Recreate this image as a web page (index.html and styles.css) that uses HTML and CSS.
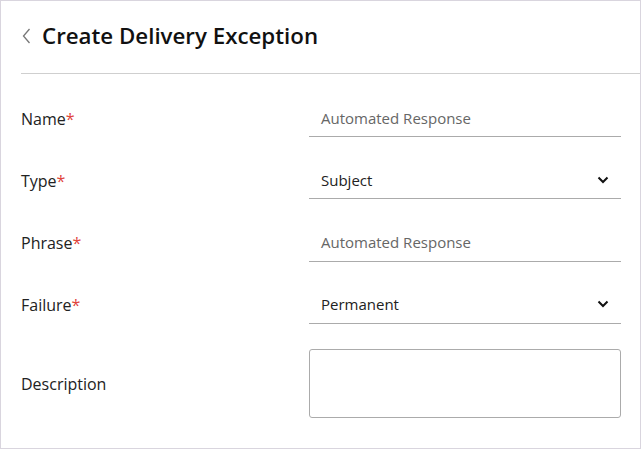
FILE: index.html
```html
<!DOCTYPE html>
<html>
<head>
<meta charset="utf-8">
<link rel="stylesheet" href="styles.css">
</head>
<body>
<div class="page">
  <header class="header">
    <svg class="back" width="9" height="16" viewBox="0 0 9 16"><path d="M7.5 1 L1.5 8 L7.5 15" fill="none" stroke="#777" stroke-width="1.3"/></svg>
    <h1 class="title">Create Delivery Exception</h1>
  </header>
  <form class="form">
    <div class="row">
      <label class="label">Name<span class="req">*</span></label>
      <div class="field"><span class="placeholder">Automated Response</span></div>
    </div>
    <div class="row">
      <label class="label">Type<span class="req">*</span></label>
      <div class="field select"><span class="value">Subject</span>
        <svg class="caret" width="12" height="8" viewBox="0 0 12 8"><path d="M1.5 1.5 L6 6 L10.5 1.5" fill="none" stroke="#111" stroke-width="2"/></svg>
      </div>
    </div>
    <div class="row">
      <label class="label">Phrase<span class="req">*</span></label>
      <div class="field"><span class="placeholder">Automated Response</span></div>
    </div>
    <div class="row">
      <label class="label">Failure<span class="req">*</span></label>
      <div class="field select"><span class="value">Permanent</span>
        <svg class="caret" width="12" height="8" viewBox="0 0 12 8"><path d="M1.5 1.5 L6 6 L10.5 1.5" fill="none" stroke="#111" stroke-width="2"/></svg>
      </div>
    </div>
    <div class="row">
      <label class="label">Description</label>
      <div class="textarea"></div>
    </div>
  </form>
</div>
</body>
</html>
```
FILE: styles.css
```css
html, body {
  margin: 0;
  padding: 0;
  background: #fff;
}
body {
  font-family: "Open Sans", "Noto Sans", sans-serif;
  color: #222;
}
.page {
  width: 641px;
  height: 449px;
  box-sizing: border-box;
  border: 1px solid #d9d5de;
  padding-left: 20px;
}
.header {
  height: 73px;
  box-sizing: border-box;
  padding-bottom: 3px;
  display: flex;
  align-items: center;
  border-bottom: 1px solid #cfcfcf;
}
.back {
  margin-left: 1px;
  margin-right: 11px;
}
.title {
  margin: 0;
  font-size: 22.3px;
  font-weight: 600;
  color: #111;
}
.form {
  padding: 26px 19px 0 0;
  display: flex;
  flex-direction: column;
  gap: 25.25px;
}
.row {
  display: flex;
  align-items: center;
}
.label {
  width: 288px;
  font-size: 16px;
  color: #222;
}
.req {
  color: #e0443c;
}
.field {
  flex: 1;
  height: 37px;
  box-sizing: border-box;
  padding: 0 12px 1px;
  border-bottom: 1px solid #ababab;
  display: flex;
  align-items: center;
  justify-content: space-between;
  font-size: 15px;
}
.placeholder {
  color: #666;
}
.value {
  color: #222;
}
.textarea {
  flex: 1;
  height: 69px;
  box-sizing: border-box;
  border: 1px solid #ababab;
  border-radius: 3px;
}
```
